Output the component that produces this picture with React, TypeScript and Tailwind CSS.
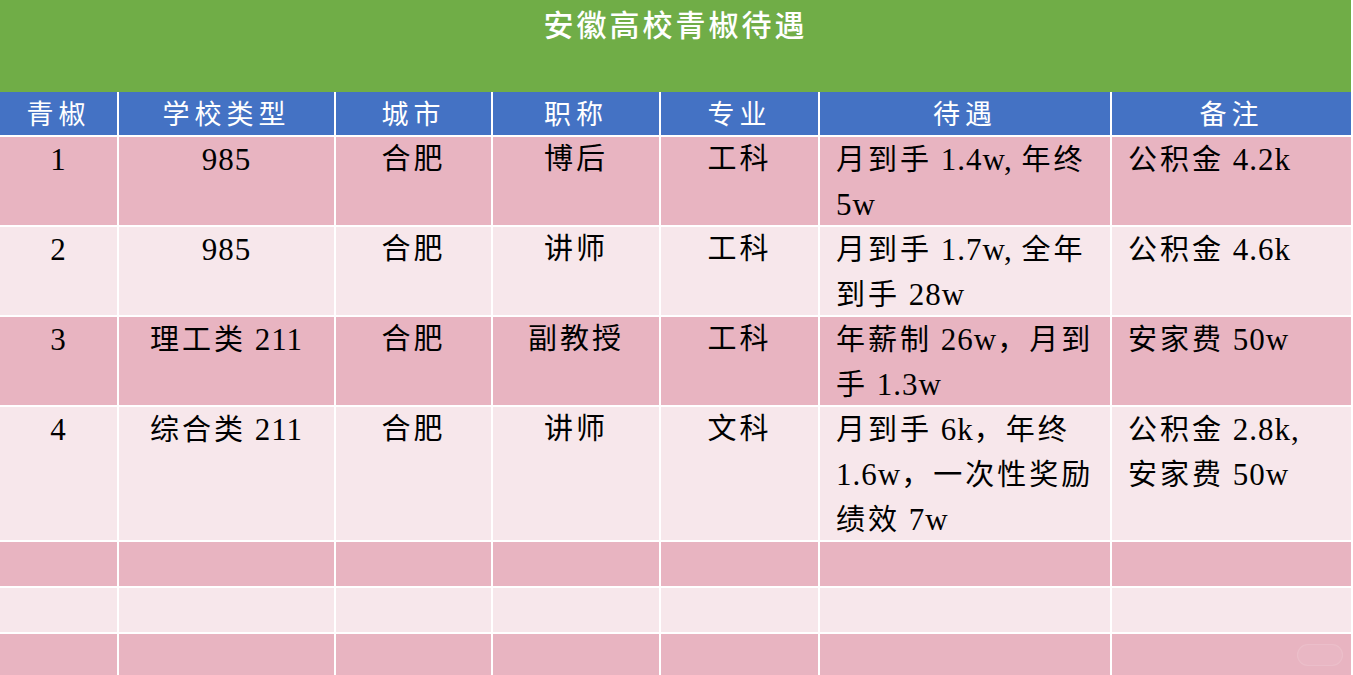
import React from 'react';

type Row = {
  id: string;
  school: string;
  city: string;
  title: string;
  major: string;
  pay: string[];
  note: string[];
};

const headers = ['青椒', '学校类型', '城市', '职称', '专业', '待遇', '备注'];

const rows: Row[] = [
  { id: '1', school: '985', city: '合肥', title: '博后', major: '工科', pay: ['月到手 1.4w, 年终', '5w'], note: ['公积金 4.2k'] },
  { id: '2', school: '985', city: '合肥', title: '讲师', major: '工科', pay: ['月到手 1.7w, 全年', '到手 28w'], note: ['公积金 4.6k'] },
  { id: '3', school: '理工类 211', city: '合肥', title: '副教授', major: '工科', pay: ['年薪制 26w，月到', '手 1.3w'], note: ['安家费 50w'] },
  { id: '4', school: '综合类 211', city: '合肥', title: '讲师', major: '文科', pay: ['月到手 6k，年终', '1.6w，一次性奖励', '绩效 7w'], note: ['公积金 2.8k,', '安家费 50w'] },
];

const bodyFont = "font-['Liberation_Serif','Noto_Sans_CJK_SC',serif]";
const dark = 'bg-[#e8b4c1]';
const light = 'bg-[#f7e7eb]';

// CJK runs get wider spacing, latin runs (numbers, w/k) are a bit bigger and tighter
const Mixed = ({ text }: { text: string }) => (
  <>
    {text.split(/([\u4e00-\u9fff\uff0c]+)/).filter(Boolean).map((part, i) =>
      /[\u4e00-\u9fff\uff0c]/.test(part) ? (
        <span key={i} className="text-[29px] tracking-[3px]">{part}</span>
      ) : (
        <span key={i} className="text-[31px] tracking-[1px]">{part}</span>
      )
    )}
  </>
);

const Lines = ({ lines }: { lines: string[] }) => (
  <>
    {lines.map((l, i) => (
      <div key={i} className="h-[45px] whitespace-nowrap text-[29px] leading-[45px]">
        <Mixed text={l} />
      </div>
    ))}
  </>
);

const App = () => {
  return (
    <div className="w-[1353px] h-[675px] overflow-hidden bg-white">
      <div className="h-[92px] w-[1351px] bg-[#70ad47] flex justify-center">
        <h1 className="mt-[6px] text-[30px] leading-[34px] font-medium tracking-[3px] text-white font-['Noto_Sans_CJK_SC',sans-serif]">
          安徽高校青椒待遇
        </h1>
      </div>

      <div className="w-[1351px] grid grid-cols-[117px_215px_155px_166px_157px_290px_239px] grid-rows-[43px_88px_88px_88px_133px_44px_44px_44px] gap-[2px] bg-white">
        {headers.map((h) => (
          <div
            key={h}
            className="bg-[#4472c4] flex items-center justify-center text-white text-[27px] tracking-[5px] font-['Noto_Sans_CJK_SC',sans-serif]"
          >
            {h}
          </div>
        ))}

        {rows.map((r, idx) => {
          const bg = idx % 2 === 0 ? dark : light;
          const cell = `${bg} ${bodyFont} text-black`;
          return (
            <React.Fragment key={r.id}>
              <div className={`${cell} text-center`}><Lines lines={[r.id]} /></div>
              <div className={`${cell} text-center`}><Lines lines={[r.school]} /></div>
              <div className={`${cell} text-center`}><Lines lines={[r.city]} /></div>
              <div className={`${cell} text-center`}><Lines lines={[r.title]} /></div>
              <div className={`${cell} text-center`}><Lines lines={[r.major]} /></div>
              <div className={`${cell} pl-[16px]`}>
                <Lines lines={r.pay} />
              </div>
              <div className={`${cell} pl-[16px]`}>
                <Lines lines={r.note} />
              </div>
            </React.Fragment>
          );
        })}

        {[0, 1, 2].map((e) =>
          headers.map((h, ci) => (
            <div key={`${e}-${h}`} className={`${e % 2 === 0 ? dark : light} relative`}>
              {e === 2 && ci === 6 && (
                <div className="absolute right-[8px] top-[10px] w-[46px] h-[22px] rounded-full bg-white/5 border border-white/10" />
              )}
            </div>
          ))
        )}
      </div>
    </div>
  );
};

export default App;
